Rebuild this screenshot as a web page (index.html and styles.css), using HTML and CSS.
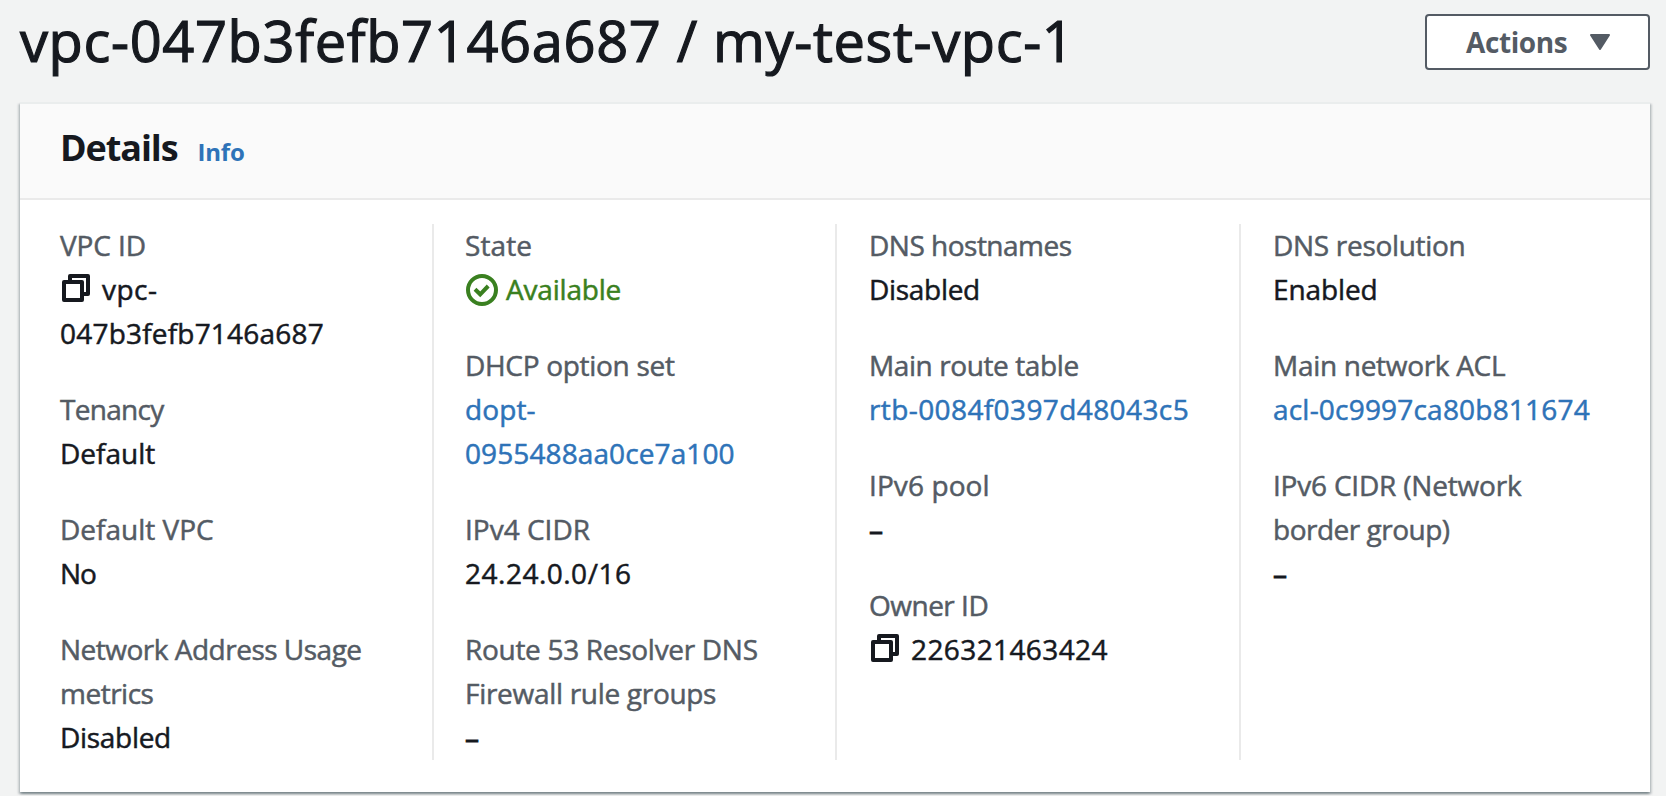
FILE: index.html
```html
<!DOCTYPE html>
<html lang="en">
<head>
<meta charset="utf-8">
<title>vpc-047b3fefb7146a687 / my-test-vpc-1</title>
<link rel="stylesheet" href="styles.css">
</head>
<body>
<svg class="defs" aria-hidden="true">
  <symbol id="copy" viewBox="0 0 32 32">
    <path d="M10 10V4h18v18h-6" fill="none" stroke="currentColor" stroke-width="4" stroke-linejoin="round"/>
    <rect x="4" y="10" width="18" height="18" fill="none" stroke="currentColor" stroke-width="4" stroke-linejoin="round"/>
  </symbol>
</svg>
<header class="page-header">
  <h1 class="title">vpc-047b3fefb7146a687 / my-test-vpc-1</h1>
  <button class="actions" type="button"><span class="n4">Actions</span>
    <svg class="caret" viewBox="0 0 20 16"><path d="M1 1h18L10 15z" fill="currentColor" stroke="currentColor" stroke-width="2" stroke-linejoin="round"/></svg>
  </button>
</header>
<main class="card">
  <div class="card-header">
    <h2 class="card-title">Details</h2>
    <a class="info">Info</a>
  </div>
  <div class="columns">
    <dl class="col">
      <div><dt class="n1">VPC ID</dt><dd class="p2"><svg class="copy"><use href="#copy"/></svg><span class="p5">vpc-</span><br>047b3fefb7146a687</dd></div>
      <div><dt class="n7">Tenancy</dt><dd>Default</dd></div>
      <div><dt>Default VPC</dt><dd class="n10">No</dd></div>
      <div><dt class="n5">Network Address Usage<br>metrics</dt><dd class="n3">Disabled</dd></div>
    </dl>
    <dl class="col">
      <div><dt class="p1">State</dt><dd class="ok n2"><svg class="status" viewBox="0 0 32 32"><circle cx="16" cy="16" r="14" fill="none" stroke="currentColor" stroke-width="4"/><path d="M9 15.3l5.2 5L22.2 12" fill="none" stroke="currentColor" stroke-width="4"/></svg>Available</dd></div>
      <div><dt class="n3">DHCP option set</dt><dd><a class="p1">dopt-<br>0955488aa0ce7a100</a></dd></div>
      <div><dt>IPv4 CIDR</dt><dd class="p5">24.24.0.0/16</dd></div>
      <div><dt class="n3">Route 53 Resolver DNS<br>Firewall rule groups</dt><dd class="dash">–</dd></div>
    </dl>
    <dl class="col">
      <div><dt class="n5">DNS hostnames</dt><dd class="n3">Disabled</dd></div>
      <div><dt class="n4">Main route table</dt><dd><a class="p4">rtb-0084f0397d48043c5</a></dd></div>
      <div><dt class="p1">IPv6 pool</dt><dd class="dash">–</dd></div>
      <div><dt class="n5">Owner ID</dt><dd class="p4"><svg class="copy"><use href="#copy"/></svg>226321463424</dd></div>
    </dl>
    <dl class="col">
      <div><dt class="n3">DNS resolution</dt><dd class="n1">Enabled</dd></div>
      <div><dt class="n3">Main network ACL</dt><dd><a class="p2">acl-0c9997ca80b811674</a></dd></div>
      <div><dt><span class="n2">IPv6 CIDR (Network</span><br><span class="n5">border group)</span></dt><dd class="dash">–</dd></div>
    </dl>
  </div>
</main>
</body>
</html>
```
FILE: styles.css
```css
* { box-sizing: border-box; }
body {
  margin: 0;
  height: 796px;
  overflow: hidden;
  background: #f2f3f3;
  color: #16191f;
  font: 400 28px/44px "Open Sans", "Noto Sans", sans-serif;
}
h1, h2, dl, dd { margin: 0; }
.defs { display: none; }

.page-header {
  display: flex;
  justify-content: space-between;
  align-items: flex-start;
  height: 102px;
  padding: 2px 16px 0 20px;
}
.title {
  font-size: 56px;
  font-weight: 400;
  line-height: 76px;
  letter-spacing: 0.64px;
  white-space: nowrap;
  -webkit-text-stroke: 1.2px currentColor;
}
.actions {
  display: flex;
  align-items: center;
  gap: 23px;
  width: 225px;
  height: 56px;
  margin-top: 12px;
  padding: 0 0 0 39px;
  border: 2px solid #545b64;
  border-radius: 4px;
  background: #fff;
  color: #545b64;
  font: 700 28px/40px "Open Sans", "Noto Sans", sans-serif;
}
.caret { width: 20px; height: 16px; }

.card {
  width: 1630px;
  height: 690px;
  margin-left: 20px;
  border-top: 2px solid #eaeded;
  background: #fff;
  box-shadow: 0 2px 2px rgba(0, 28, 36, .3), 2px 2px 2px rgba(0, 28, 36, .15), -2px 2px 2px rgba(0, 28, 36, .15);
}
.card-header {
  display: flex;
  align-items: baseline;
  gap: 20px;
  height: 96px;
  padding: 19px 40px 0;
  border-bottom: 2px solid #eaeaea;
  background: #fafafa;
}
.card-title {
  font-size: 36px;
  font-weight: 700;
  line-height: 50px;
  letter-spacing: -1.1px;
}
.info {
  color: #2e73b8;
  font-size: 24px;
  font-weight: 700;
  letter-spacing: -0.2px;
}

.columns {
  display: grid;
  grid-template-columns: 372px 403px 404px 1fr;
  padding: 24px 38px 0 40px;
}
.col {
  display: flex;
  flex-direction: column;
  gap: 32px;
  height: 536px;
  padding-left: 31px;
  border-left: 2px solid #eaeaea;
  white-space: nowrap;
}
.col:first-child { padding-left: 0; border-left: 0; }
.col:nth-child(n + 3) { padding-left: 32px; }
.col > div {
  margin: -1px 0 1px;
  -webkit-text-stroke: 0.5px currentColor;
}
dt { color: #545b64; }
a { color: #2e73b8; }
.ok { color: #3a8020; }
.copy {
  width: 32px;
  height: 32px;
  margin-right: 10px;
  vertical-align: -4px;
}
.status {
  width: 32px;
  height: 32px;
  margin: 0 8px 0 1px;
  vertical-align: -6px;
}
.dash { -webkit-text-stroke-width: 1px; }

/* Tracking steps, in tenths of a pixel */
.n1 { letter-spacing: -0.1px; }
.n2 { letter-spacing: -0.2px; }
.n3 { letter-spacing: -0.3px; }
.n4 { letter-spacing: -0.4px; }
.n5 { letter-spacing: -0.5px; }
.n7 { letter-spacing: -0.7px; }
.n10 { letter-spacing: -1px; }
.p1 { letter-spacing: 0.1px; }
.p2 { letter-spacing: 0.2px; }
.p4 { letter-spacing: 0.4px; }
.p5 { letter-spacing: 0.5px; }
```
